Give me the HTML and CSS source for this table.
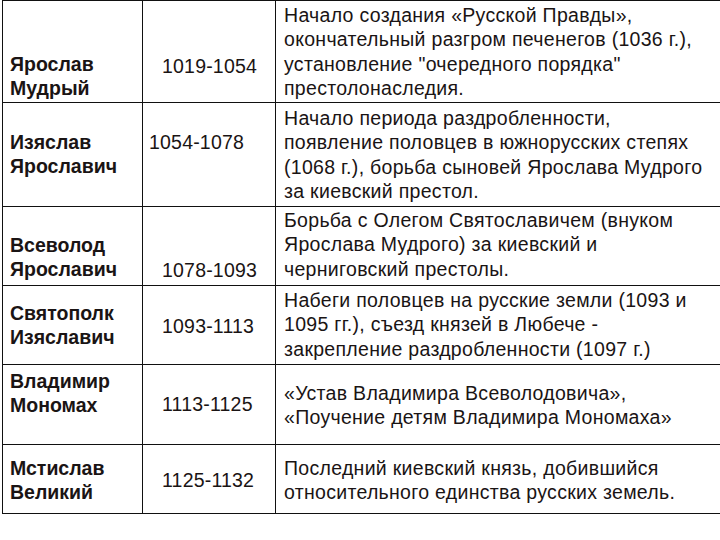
FILE: index.html
```html
<!DOCTYPE html>
<html lang="ru">
<head>
<meta charset="utf-8">
<title>Киевские князья</title>
<link rel="stylesheet" href="styles.css">
</head>
<body>
<div class="table">
  <div class="cell name r1n">Ярослав<br>Мудрый</div>
  <div class="cell date r1d">1019-1054</div>
  <div class="cell desc r1t">Начало создания «Русской Правды»,<br>окончательный разгром печенегов (1036 г.),<br>установление "очередного порядка"<br>престолонаследия.</div>

  <div class="cell name r2n">Изяслав<br>Ярославич</div>
  <div class="cell date date-left r2d">1054-1078</div>
  <div class="cell desc r2t">Начало периода раздробленности,<br>появление половцев в южнорусских степях<br>(1068 г.), борьба сыновей Ярослава Мудрого<br>за киевский престол.</div>

  <div class="cell name r3n">Всеволод<br>Ярославич</div>
  <div class="cell date r3d">1078-1093</div>
  <div class="cell desc r3t">Борьба с Олегом Святославичем (внуком<br>Ярослава Мудрого) за киевский и<br>черниговский престолы.</div>

  <div class="cell name r4n">Святополк<br>Изяславич</div>
  <div class="cell date r4d">1093-1113</div>
  <div class="cell desc r4t">Набеги половцев на русские земли (1093 и<br>1095 гг.), съезд князей в Любече -<br>закрепление раздробленности (1097 г.)</div>

  <div class="cell name r5n">Владимир<br>Мономах</div>
  <div class="cell date r5d">1113-1125</div>
  <div class="cell desc r5t">«Устав Владимира Всеволодовича»,<br>«Поучение детям Владимира Мономаха»</div>

  <div class="cell name r6n">Мстислав<br>Великий</div>
  <div class="cell date r6d">1125-1132</div>
  <div class="cell desc r6t">Последний киевский князь, добившийся<br>относительного единства русских земель.</div>
</div>
</body>
</html>
```

FILE: styles.css
```css
html, body {
  margin: 0;
  padding: 0;
  background: #fff;
  overflow: hidden;
}

body {
  width: 720px;
  height: 540px;
  font-family: "Liberation Sans", Arial, sans-serif;
  font-size: 19.5px;
  line-height: 24.5px;
  letter-spacing: 0.3px;
  color: #1a1414;
}

.table {
  margin-left: 2px;
  display: grid;
  grid-template-columns: 140px 133px 444px;
  grid-template-rows: 102px 104px 79px 79px 80px 69px;
  border-top: 1px solid #111;
  border-left: 1px solid #111;
  width: max-content;
}

.cell {
  border-right: 1px solid #111;
  border-bottom: 1px solid #111;
  white-space: nowrap;
}

.name {
  font-weight: bold;
  letter-spacing: 0;
  padding-left: 7px;
}

.date {
  padding-left: 19px;
  letter-spacing: 0.2px;
}

.date-left {
  padding-left: 6px;
}

.desc {
  padding-left: 8px;
  border-right: none;
}

.r1n { padding-top: 50.5px; }
.r1d { padding-top: 52.5px; }
.r1t { padding-top: 1.5px; }

.r2n { padding-top: 26.5px; }
.r2d { padding-top: 26.5px; }
.r2t { padding-top: 2.5px; }

.r3n { padding-top: 25.5px; }
.r3d { padding-top: 50.5px; }
.r3t { padding-top: 0.5px; }

.r4n { padding-top: 14.5px; }
.r4d { padding-top: 27.5px; }
.r4t { padding-top: 1.5px; }

.r5n { padding-top: 3.5px; }
.r5d { padding-top: 26.5px; }
.r5t { padding-top: 15.5px; }

.r6n { padding-top: 10.5px; }
.r6d { padding-top: 22.5px; }
.r6t { padding-top: 10.5px; }
```
